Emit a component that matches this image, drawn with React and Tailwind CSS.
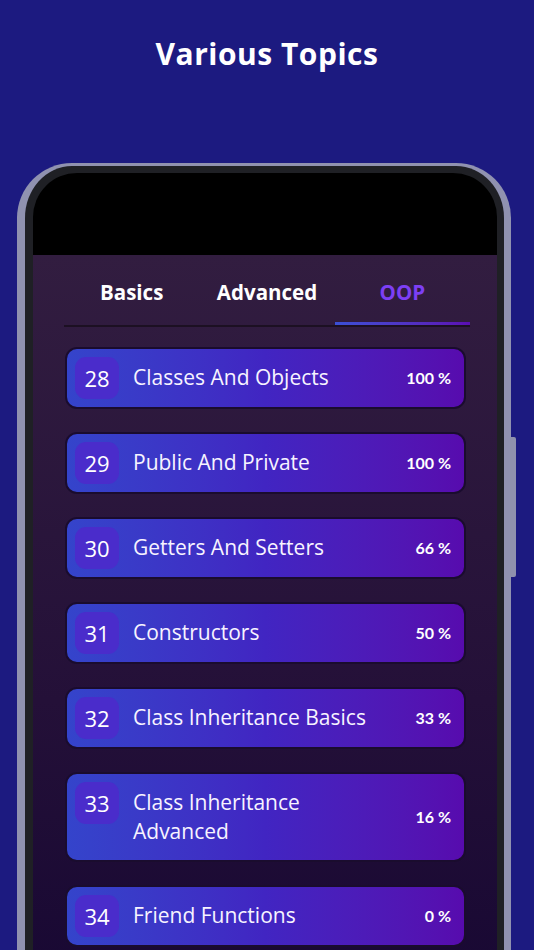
import React from "react";

const topics = [
  { n: 28, t: "Classes And Objects", p: "100 %" },
  { n: 29, t: "Public And Private", p: "100 %" },
  { n: 30, t: "Getters And Setters", p: "66 %" },
  { n: 31, t: "Constructors", p: "50 %" },
  { n: 32, t: "Class Inheritance Basics", p: "33 %" },
  { n: 33, t: "Class Inheritance Advanced", p: "16 %" },
  { n: 34, t: "Friend Functions", p: "0 %" },
];

function Card({ n, t, p }) {
  return (
    <div className="flex w-[401px] items-start rounded-[12px] border-2 border-[#1a0c2e] bg-gradient-to-r from-[#3444cb] via-[#4125c2] to-[#570bae] p-[8px]">
      <div className="flex h-[42px] w-[44px] shrink-0 items-center justify-center rounded-[11px] bg-[#4a2ccb] text-[22px] leading-none text-white">
        {n}
      </div>
      <div className="ml-[14px] max-w-[240px] py-[6px] text-[21px] font-medium leading-[29px] text-[#f7f3ff]">
        {t}
      </div>
      <div
        className="ml-auto mr-[5px] self-center text-[16px] font-bold text-white"
        style={{ fontFamily: "Lato, sans-serif" }}
      >
        {p}
      </div>
    </div>
  );
}

export default function App() {
  return (
    <div
      className="h-[950px] w-[534px] overflow-hidden bg-[#1c1a80]"
      style={{ fontFamily: "'Open Sans', 'Noto Sans', sans-serif" }}
    >
      <h1 className="pt-[33px] text-center text-[30px] font-bold leading-[42px] tracking-[0.5px] text-white">
        Various Topics
      </h1>
      <div className="relative ml-[17px] mt-[88px] w-[494px]">
        <div className="absolute right-[-5px] top-[274px] h-[140px] w-[6px] rounded-r-[2px] bg-[#8f91ad]" />
        <div className="h-[900px] rounded-t-[55px] border-l-[8px] border-r-[7px] border-t-[3px] border-[#9092b0] bg-[#1f2025] pl-[8px] pr-[7px] pt-[7px]">
          <div className="h-[890px] overflow-hidden rounded-t-[44px]">
            <div className="h-[82px] bg-black" />
            <div className="h-full bg-gradient-to-b from-[#321d40] via-[#241038] to-[#120430] pb-10">
              <div className="ml-[31px] grid w-[406px] grid-cols-3 border-b-2 border-[#1c1022]">
                {["Basics", "Advanced", "OOP"].map((tab, i) => (
                  <div key={tab} className="flex flex-col items-center pt-[22px]">
                    <div
                      className={
                        "h-[30px] text-[20.5px] font-bold leading-[30px] " +
                        (i === 2 ? "text-[#7d3ff5]" : "text-white")
                      }
                    >
                      {tab}
                    </div>
                    <div
                      className={
                        "mt-[15px] h-[3px] w-full " +
                        (i === 2 ? "bg-gradient-to-r from-[#3a4fd6] to-[#5a0cb3]" : "")
                      }
                    />
                  </div>
                ))}
              </div>
              <div className="ml-[32px] mt-[20px] flex flex-col gap-[23px]">
                {topics.map((x) => (
                  <Card key={x.n} {...x} />
                ))}
              </div>
            </div>
          </div>
        </div>
      </div>
    </div>
  );
}
